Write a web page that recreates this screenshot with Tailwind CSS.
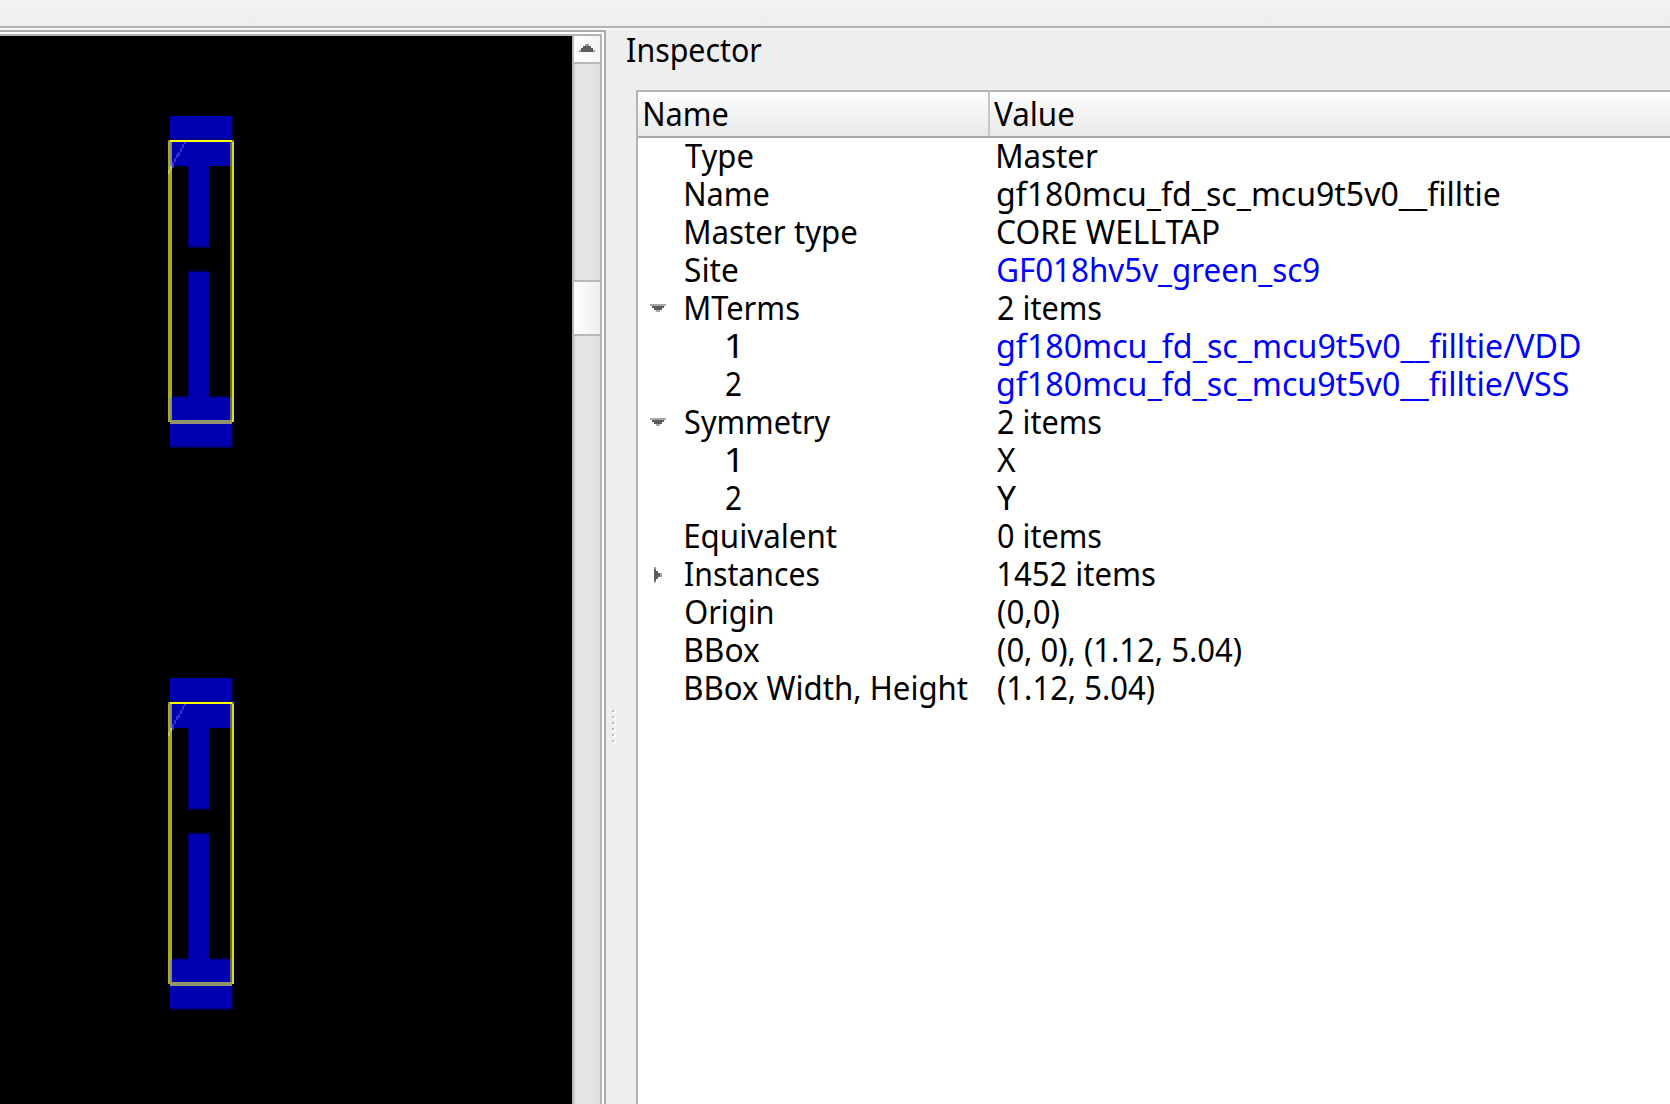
<!DOCTYPE html>
<html lang="en">
<head>
<meta charset="utf-8">
<title>Inspector</title>
<script src="https://cdn.jsdelivr.net/npm/@tailwindcss/browser@4"></script>
</head>
<body class="h-[1104px] w-[1670px] overflow-hidden bg-[#eeeeee] font-['Noto_Sans',sans-serif] text-[33.6px] leading-[34px] text-black">
<div class="flex h-full w-full flex-col">
  <!-- Toolbar -->
  <div class="h-7 shrink-0 border-b-2 border-[#b4b4b4] bg-gradient-to-b from-[#f3f3f3] to-[#eeeeee]"></div>
  <div class="h-0.5 shrink-0 bg-[#f5f5f5]"></div>

  <div class="flex min-h-0 flex-1">
    <!-- Layout viewer -->
    <div class="w-[606px] shrink-0 border-t-2 border-r-2 border-[#ababab] bg-white pt-0.5 pr-0.5">
      <div class="flex h-full border-t-2 border-r-2 border-[#b4b4b4]">
        <svg class="h-[1068px] w-[572px] shrink-0 bg-black" viewBox="0 36 572 1068" shape-rendering="crispEdges">
          <defs>
            <g id="cell">
              <path fill="#0000b0" d="M170 116h62v50h-22v80h-22v-80h-18zM188 272h22v126h22v48h-62v-48h18z"/>
              <path fill="#000068" d="M188 246h22v2h-22zM170 446h62v2h-62zM170 396h18v2h-18zM210 396h22v2h-22z"/>
              <path fill="#000038" d="M188 270h22v2h-22zM232 116h2v24h-2zM232 424h2v24h-2z"/>
              <path fill="#00008c" d="M188 166h2v80h-2zM208 166h2v80h-2zM188 272h2v124h-2zM208 272h2v124h-2zM170 138h62v2h-62z"/>
              <path fill="#a9a925" d="M168 142h4v280h-4z"/>
              <path fill="#88887c" d="M170 142h2v24h-2zM170 398h2v22h-2z"/>
              <path fill="#6b6b18" d="M230 142h2v278h-2z"/>
              <path fill="#62627a" d="M230 142h2v24h-2zM230 398h2v22h-2z"/>
              <path fill="#dede18" d="M232 142h2v280h-2z"/>
              <path fill="#ffff00" d="M170 140h62v2h-62z"/>
              <path fill="#8a8a30" d="M168 140h2v2h-2zM232 140h2v2h-2z"/>
              <path fill="#92926c" d="M170 420h62v4h-62z"/>
              <path fill="#3030dc" d="M184 142h2v2h-2zM182 144h2v4h-2zM180 148h2v4h-2zM178 152h2v4h-2zM176 154h2v4h-2zM174 158h2v4h-2zM172 162h2v6h-2z"/>
              <path fill="#c8c860" d="M170 166h2v4h-2zM168 170h2v4h-2z"/>
            </g>
          </defs>
          <use href="#cell"/>
          <use href="#cell" y="562"/>
        </svg>
        <!-- Vertical scroll bar -->
        <div class="flex w-7 flex-col border-l-2 border-[#b8b8b8]">
          <div class="flex h-7 shrink-0 justify-center border-b-2 border-[#b8b8b8] bg-gradient-to-r from-white to-[#f4f4f4] pt-2">
            <svg class="h-2 w-4" viewBox="0 0 16 8" shape-rendering="crispEdges"><path fill="#5d5d5d" d="M6 0h4v2h2v2h2v2h2v2H0V6h2V4h2V2h2z"/><path fill="#9a9a9a" d="M6 0h4v2H6zM0 6h2v2H0zM14 6h2v2h-2z"/></svg>
          </div>
          <div class="h-[216px] shrink-0 border-l-2 border-[#dadada] bg-gradient-to-r from-[#e4e4e4] from-70% to-[#dddddd]"></div>
          <div class="h-14 shrink-0 border-y-2 border-[#b8b8b8] bg-gradient-to-r from-white to-[#eeeeee]"></div>
          <div class="flex-1 border-l-2 border-[#dadada] bg-gradient-to-r from-[#e4e4e4] from-70% to-[#dddddd]"></div>
        </div>
      </div>
    </div>

    <!-- Splitter handle -->
    <div class="flex w-4 shrink-0 flex-col items-center gap-0.5 pt-[680px]">
      <div class="size-1 bg-[#f8f8f8]"><div class="size-0.5 bg-[#bababa]"></div></div>
      <div class="size-1 bg-[#f8f8f8]"><div class="size-0.5 bg-[#bababa]"></div></div>
      <div class="size-1 bg-[#f8f8f8]"><div class="size-0.5 bg-[#bababa]"></div></div>
      <div class="size-1 bg-[#f8f8f8]"><div class="size-0.5 bg-[#bababa]"></div></div>
      <div class="size-1 bg-[#f8f8f8]"><div class="size-0.5 bg-[#bababa]"></div></div>
      <div class="size-1 bg-[#f8f8f8]"><div class="size-0.5 bg-[#bababa]"></div></div>
    </div>

    <!-- Inspector dock -->
    <div class="flex min-w-0 flex-1 flex-col">
      <div class="h-[60px] shrink-0 pt-0.5 pl-[5px]"><span class="inline-block origin-left whitespace-pre" data-w="135">Inspector</span></div>
      <div class="ml-[14px] flex flex-1 flex-col border-t-2 border-l-2 border-[#b4b4b4] bg-white">
        <div class="flex h-[46px] shrink-0 border-b-2 border-[#a9a9a9] bg-gradient-to-b from-[#fdfdfd] to-[#e9e9e9]">
          <div class="w-[352px] shrink-0 border-r-2 border-[#c6c6c6] pt-1 pl-[6px]"><span class="inline-block origin-left whitespace-pre" data-w="83">Name</span></div>
          <div class="pt-1 pl-[4px]"><span class="inline-block origin-left whitespace-pre" data-w="80">Value</span></div>
        </div>
        <div id="tree" class="flex flex-col"></div>
      </div>
    </div>
  </div>
</div>

<script>
// [depth, expander, name, name width, value, value width, is link]
const rows = [
  [0, '', 'Type', 68, 'Master', 100, 0],
  [0, '', 'Name', 83, 'gf180mcu_fd_sc_mcu9t5v0__filltie', 503, 0],
  [0, '', 'Master type', 171, 'CORE WELLTAP', 221, 0],
  [0, '', 'Site', 53, 'GF018hv5v_green_sc9', 321, 1],
  [0, 'open', 'MTerms', 113, '2 items', 103, 0],
  [1, '', '1', 11, 'gf180mcu_fd_sc_mcu9t5v0__filltie/VDD', 583, 1],
  [1, '', '2', 15, 'gf180mcu_fd_sc_mcu9t5v0__filltie/VSS', 571, 1],
  [0, 'open', 'Symmetry', 146, '2 items', 103, 0],
  [1, '', '1', 11, 'X', 19, 0],
  [1, '', '2', 15, 'Y', 19, 0],
  [0, '', 'Equivalent', 151, '0 items', 103, 0],
  [0, 'closed', 'Instances', 134, '1452 items', 157, 0],
  [0, '', 'Origin', 87, '(0,0)', 61, 0],
  [0, '', 'BBox', 74, '(0, 0), (1.12, 5.04)', 243, 0],
  [0, '', 'BBox Width, Height', 282, '(1.12, 5.04)', 156, 0],
];
const icons = {
  '': '',
  open: '<svg class="mt-[14px] h-2 w-4" viewBox="0 0 16 8" shape-rendering="crispEdges"><path fill="#5d5d5d" d="M2 0h12v4h-2v2h-2v2H6V6H4V4H2z"/><path fill="#a8a8a8" d="M0 0h16v2H0zM6 6h4v2H6z"/></svg>',
  closed: '<svg class="mt-[11px] ml-1 h-4 w-2" viewBox="0 0 8 16" shape-rendering="crispEdges"><path fill="#5d5d5d" d="M0 2h2v2h2v2h2v4H4v2H2v2H0z"/><path fill="#a8a8a8" d="M0 0h2v2H0zM6 6h2v4H6zM0 14h2v2H0z"/></svg>',
};
const label = (t, w) => `<span class="inline-block origin-left whitespace-pre" data-w="${w}">${t}</span>`;
document.getElementById('tree').innerHTML = rows.map(([d, e, n, nw, v, vw, l]) =>
  `<div class="flex h-[38px]"><div class="w-[47px] shrink-0 pl-3">${icons[e]}</div>` +
  `<div class="w-[312px] shrink-0 ${d ? 'pl-[41px]' : ''}">${label(n, nw)}</div>` +
  `<div class="${l ? 'text-[#0000ff]' : ''}">${label(v, vw)}</div></div>`).join('');

// Condense each label so its inked width equals data-w;
const ctx = document.createElement('canvas').getContext('2d');
ctx.font = '33.6px "Noto Sans"';
document.querySelectorAll('[data-w]').forEach(el => {
  const m = ctx.measureText(el.textContent);
  const s = el.dataset.w / (m.actualBoundingBoxRight + m.actualBoundingBoxLeft);
  const bearing = /^[BEMNOCG(0-9]./.test(el.textContent) ? 1 : 0;
  el.style.transform = `translateX(${m.actualBoundingBoxLeft * s + bearing}px) scaleX(${s})`;
});
</script>
</body>
</html>
